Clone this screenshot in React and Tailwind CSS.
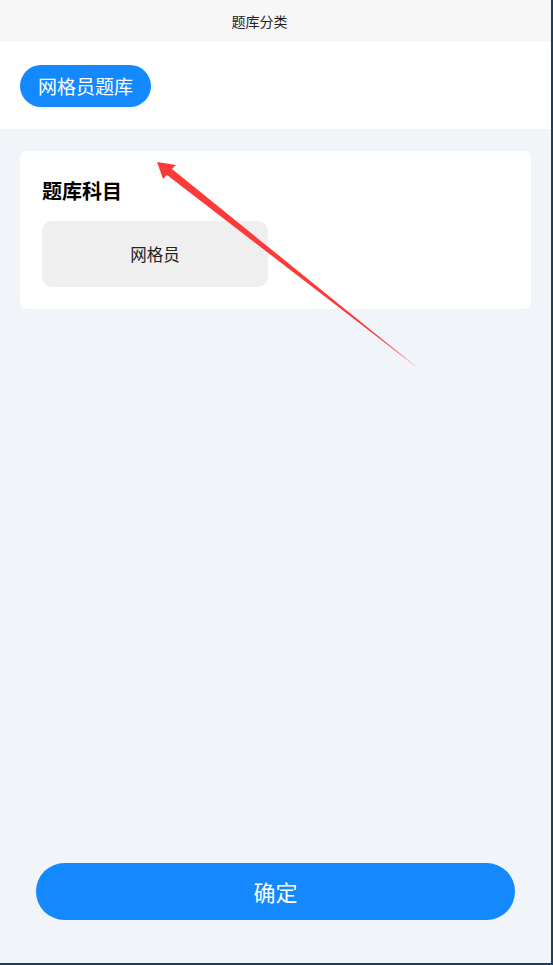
import React from 'react';

const App = () => {
    return (
        <div className="relative w-[553px] h-[965px] bg-[#f1f4f8] flex flex-col border-r-2 border-b-2 border-[#1d3d5c]" style={{ fontFamily: '"Noto Sans CJK SC", "Noto Sans", sans-serif' }}>
            {/* Header */}
            <div className="h-[42px] bg-[#f7f7f7] flex items-center justify-center pr-[32px] text-[14px] text-[#222]">
                题库分类
            </div>

            {/* Category tabs */}
            <div className="h-[87px] bg-white flex items-center px-[20px]">
                <button className="h-[42px] px-[18px] rounded-full bg-[#1389fd] text-white text-[19px] leading-none">
                    网格员题库
                </button>
            </div>

            {/* Subject card */}
            <div className="mx-[20px] mt-[22px] bg-white rounded-[7px] px-[22px] pt-[24px] pb-[22px]">
                <h2 className="text-[20px] font-bold text-black leading-[32px]">题库科目</h2>
                <div className="mt-[14px] w-[226px] h-[66px] bg-[#efefef] rounded-[10px] flex items-center justify-center text-[16.5px] text-[#222]">
                    网格员
                </div>
            </div>

            <div className="flex-1" />

            {/* Confirm */}
            <div className="px-[36px] pb-[43px]">
                <button className="w-full h-[57px] rounded-full bg-[#1389fd] text-white text-[22px]">
                    确定
                </button>
            </div>

            {/* Annotation arrow */}
            <svg className="absolute left-0 top-0 pointer-events-none" width="553" height="965">
                <polygon points="157,162 176,165 172,169 419,369 167,175 163,179" fill="#fd3a3a" />
            </svg>
        </div>
    );
};

export default App;
